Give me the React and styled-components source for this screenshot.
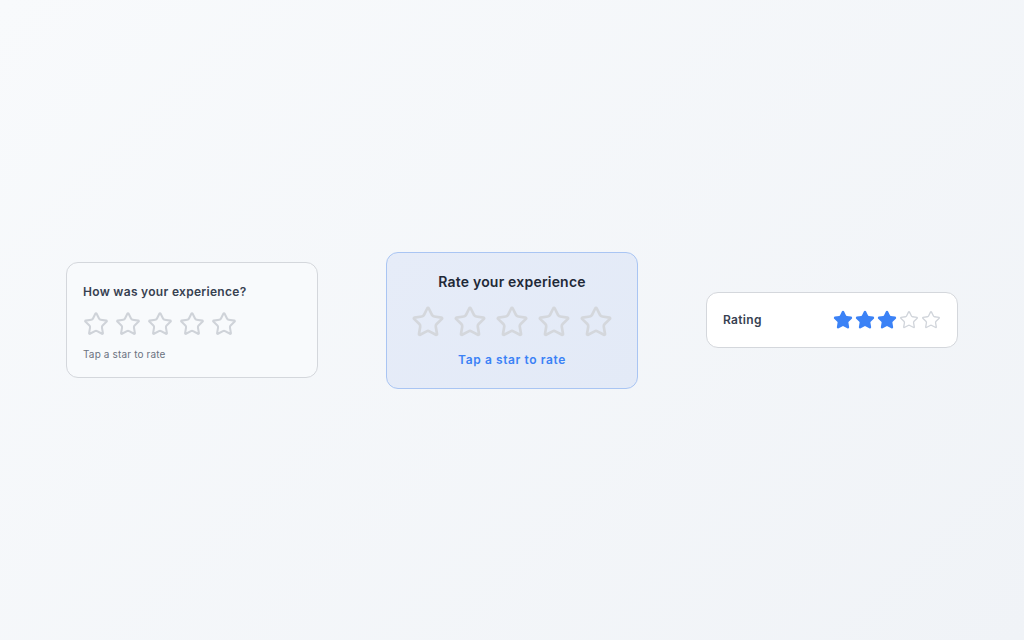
import React from "react";
import styled, { createGlobalStyle } from "styled-components";

const Global = createGlobalStyle`
  html, body { margin: 0; padding: 0; }
  body {
    font-family: Inter, "Noto Sans", sans-serif;
    -webkit-font-smoothing: antialiased;
  }
`;

const Page = styled.div`
  width: 1024px;
  height: 640px;
  background: linear-gradient(135deg, #f8fafc 0%, #f0f3f7 100%);
  display: flex;
  align-items: center;
  justify-content: center;
  gap: 68px;
`;

const Card = styled.div`
  box-sizing: border-box;
  width: 252px;
  border-radius: 12px;
  border: 1px solid ${(p) => p.$border};
  background: ${(p) => p.$bg};
`;

const PromptCard = styled(Card)`
  height: 116px;
  padding: 20px 16px 0;
  display: flex;
  flex-direction: column;
`;

const FocusCard = styled(Card)`
  height: 137px;
  padding: 20px 16px 0;
  display: flex;
  flex-direction: column;
  align-items: center;
`;

const InlineCard = styled(Card)`
  height: 56px;
  padding: 0 16px;
  display: flex;
  align-items: center;
  justify-content: space-between;
`;

const Title = styled.div`
  font-size: ${(p) => p.$size}px;
  font-weight: 600;
  color: ${(p) => p.$color};
  line-height: 18px;
  letter-spacing: ${(p) => p.$ls}px;
`;

const Stars = styled.div`
  display: flex;
  gap: ${(p) => p.$gap}px;
  margin-top: ${(p) => p.$mt || 0}px;
`;

const Caption = styled.div`
  font-size: ${(p) => p.$size}px;
  font-weight: ${(p) => p.$weight};
  color: ${(p) => p.$color};
  margin-top: ${(p) => p.$mt}px;
  line-height: 14px;
  letter-spacing: ${(p) => p.$ls}px;
`;

const StarSvg = ({ size, fill = "none", stroke, sw = 2 }) => (
  <svg
    width={size}
    height={size}
    viewBox="0 0 24 24"
    fill={fill}
    stroke={stroke}
    strokeWidth={sw}
    strokeLinecap="round"
    strokeLinejoin="round"
  >
    <path d="M11.525 2.295a.53.53 0 0 1 .95 0l2.31 4.679a2.123 2.123 0 0 0 1.595 1.16l5.166.756a.53.53 0 0 1 .294.904l-3.736 3.638a2.123 2.123 0 0 0-.611 1.878l.882 5.14a.53.53 0 0 1-.771.56l-4.618-2.428a2.122 2.122 0 0 0-1.973 0L6.396 21.01a.53.53 0 0 1-.77-.56l.881-5.139a2.122 2.122 0 0 0-.611-1.879L2.16 9.795a.53.53 0 0 1 .294-.906l5.165-.755a2.122 2.122 0 0 0 1.597-1.16z" />
  </svg>
);

export default function App() {
  const rating = 3;
  return (
    <>
      <Global />
      <Page>
        <PromptCard $bg="#f8fafc" $border="#d4d7dc">
          <Title $size={12} $ls={0.3} $color="#374151">How was your experience?</Title>
          <Stars $gap={6} $mt={10}>
            {[0, 1, 2, 3, 4].map((i) => (
              <StarSvg key={i} size={26} stroke="#cfd3d9" sw={1.9} />
            ))}
          </Stars>
          <Caption $size={10} $weight={400} $ls={0.15} $color="#6b7280" $mt={10}>
            Tap a star to rate
          </Caption>
        </PromptCard>

        <FocusCard $bg="linear-gradient(135deg, #e6ecf8 0%, #e3eaf7 100%)" $border="#a9c5f3">
          <Title $size={14} $ls={0.2} $color="#1f2937">Rate your experience</Title>
          <Stars $gap={8} $mt={14}>
            {[0, 1, 2, 3, 4].map((i) => (
              <StarSvg key={i} size={34} stroke="#d4d7dc" sw={1.9} />
            ))}
          </Stars>
          <Caption $size={12} $weight={600} $ls={0.6} $color="#3b82f6" $mt={14}>
            Tap a star to rate
          </Caption>
        </FocusCard>

        <InlineCard $bg="#ffffff" $border="#d4d7dc">
          <Title $size={12} $ls={0.3} $color="#374151">Rating</Title>
          <Stars $gap={2}>
            {[0, 1, 2, 3, 4].map((i) =>
              i < rating ? (
                <StarSvg key={i} size={20} fill="#3b82f6" stroke="#3b82f6" sw={2} />
              ) : (
                <StarSvg key={i} size={20} stroke="#d1d5db" sw={1.6} />
              )
            )}
          </Stars>
        </InlineCard>
      </Page>
    </>
  );
}
